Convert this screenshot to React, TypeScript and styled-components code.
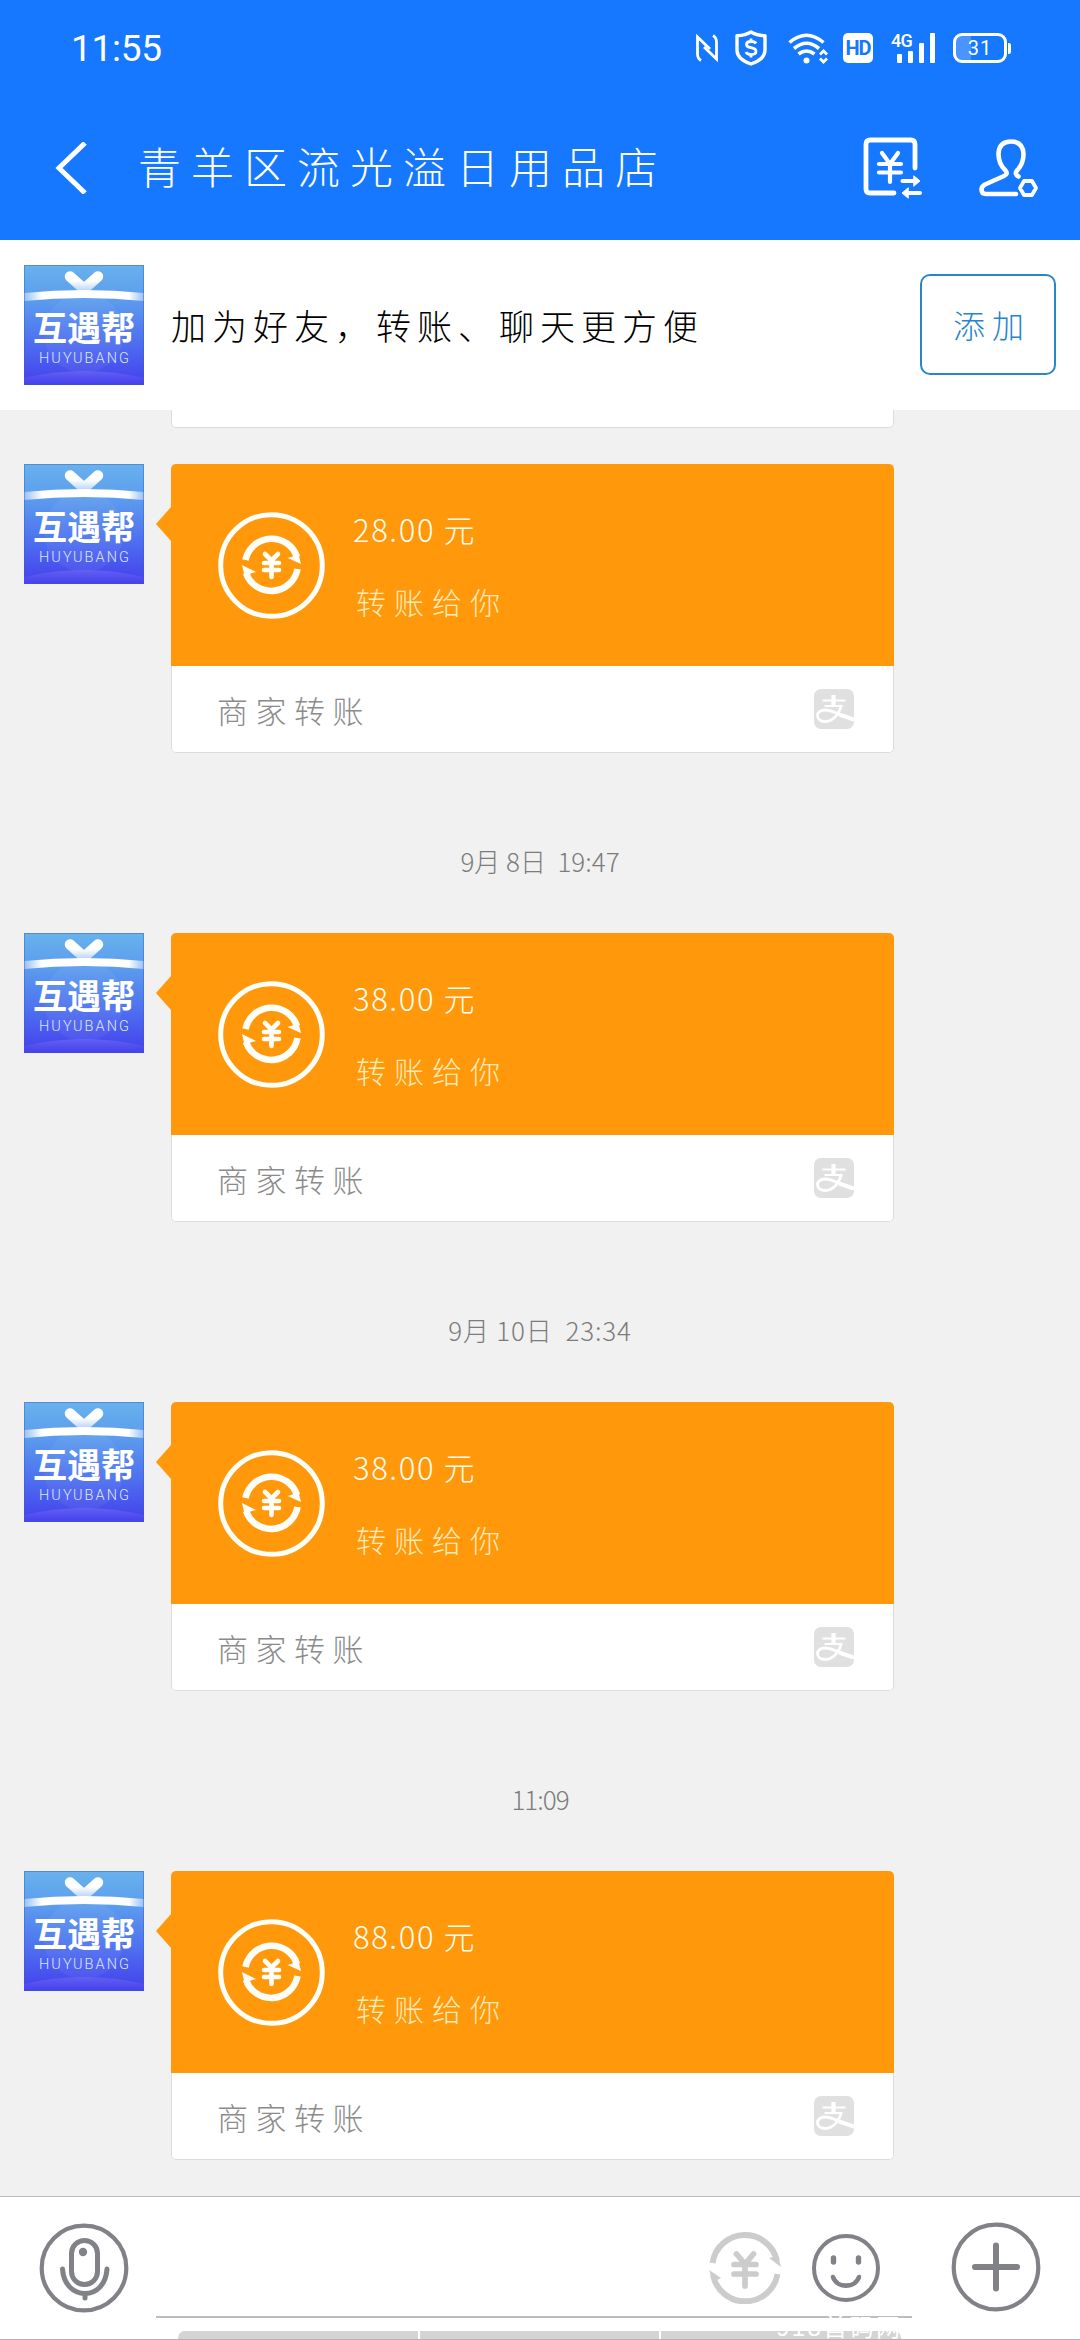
import React from 'react';
import styled, { createGlobalStyle } from 'styled-components';

const GlobalStyle = createGlobalStyle`
  *, *::before, *::after { box-sizing: border-box; }
  body {
    margin: 0;
    background: #f1f1f1;
    font-family: "Noto Sans CJK SC", "Noto Sans", sans-serif;
    font-weight: 300;
  }
  svg { display: block; flex: none; }
`;

const Screen = styled.div`
  width: 1080px;
  height: 2340px;
  display: flex;
  flex-direction: column;
  overflow: hidden;
  background: #f1f1f1;
`;

/* ---------- Header ---------- */

const Header = styled.header`
  flex: none;
  height: 240px;
  background: #1677ff;
  color: #fff;
  display: flex;
  flex-direction: column;
`;

const StatusBar = styled.div`
  height: 96px;
  padding: 0 69px 0 71px;
  display: flex;
  align-items: center;
  justify-content: space-between;
`;

const Clock = styled.span`
  font: 400 37px/1 Roboto, sans-serif;
  letter-spacing: -0.3px;
`;

const StatusIcons = styled.div`
  display: flex;
  align-items: center;
`;

const Slot = styled.div<{ $gap: number }>`
  margin-left: ${(p) => p.$gap}px;
  display: flex;
`;

const HdBadge = styled.span`
  width: 30px;
  height: 30px;
  border-radius: 5px;
  background: #fff;
  color: #1677ff;
  display: flex;
  align-items: center;
  justify-content: center;
  font: 700 20px/1 Roboto, sans-serif;
  letter-spacing: -1px;
`;

const Signal = styled.div`
  position: relative;
  width: 45px;
  height: 30px;
`;

const SignalLabel = styled.span`
  position: absolute;
  left: 0;
  top: -1px;
  font: 500 18px/18px Roboto, sans-serif;
  letter-spacing: -0.8px;
`;

const Battery = styled.div`
  width: 54px;
  height: 30px;
  border: 3px solid #fff;
  border-radius: 9px;
  background: linear-gradient(90deg, #4a94ff 31%, #1677ff 31%);
  display: flex;
  align-items: center;
  justify-content: center;
  font: 400 20px/1 Roboto, sans-serif;
  letter-spacing: 1px;
`;

const BatteryCap = styled.div`
  width: 3px;
  height: 11px;
  margin: 10px 0 0 1px;
  border-radius: 0 2px 2px 0;
  background: #fff;
`;

const TitleBar = styled.div`
  flex: 1;
  display: flex;
  align-items: center;
  padding: 0 40px 0 55px;
`;

const Title = styled.h1`
  flex: 1;
  margin: 0 0 6px 51px;
  font-size: 43px;
  line-height: 60px;
  font-weight: 300;
  letter-spacing: 10px;
  white-space: nowrap;
`;

const TitleActions = styled.div`
  display: flex;
  align-items: center;
  gap: 56px;
`;

/* ---------- Add-friend strip ---------- */

const FriendBar = styled.section`
  flex: none;
  height: 170px;
  padding: 0 24px;
  display: flex;
  align-items: center;
  background: #fff;
`;

const FriendText = styled.p`
  flex: 1;
  margin: 0 0 0 27px;
  color: #000;
  font-size: 35px;
  line-height: 50px;
  letter-spacing: 6px;
  white-space: nowrap;
`;

const AddButton = styled.button`
  width: 136px;
  height: 101px;
  margin-bottom: 1px;
  padding: 0 0 2px 8px;
  border: 2px solid #2a86c8;
  border-radius: 10px;
  background: #fff;
  color: #1f86d0;
  font: 300 32px/1 "Noto Sans CJK SC", sans-serif;
  letter-spacing: 7px;
`;

/* ---------- Conversation ---------- */

const Conversation = styled.main`
  flex: 1;
  min-height: 0;
  display: flex;
  flex-direction: column;
  overflow: hidden;
`;

const PreviousCard = styled.div`
  flex: none;
  width: 723px;
  height: 18px;
  margin: 0 0 36px 171px;
  background: #fff;
  border: 1px solid #dcdcdc;
  border-top: 0;
  border-radius: 0 0 5px 5px;
`;

const Timestamp = styled.time<{ $tracking: number }>`
  flex: none;
  height: 180px;
  padding-top: 88px;
  text-align: center;
  color: #7c7c7c;
  font-size: 26px;
  line-height: 40px;
  letter-spacing: ${(p) => p.$tracking}px;
  white-space: pre;
`;

const Message = styled.article`
  flex: none;
  height: 289px;
  padding-left: 24px;
  display: flex;
  align-items: flex-start;
`;

const BubbleTail = styled.div`
  width: 15px;
  height: 34px;
  margin: 43px 0 0 12px;
  background: #ff980a;
  clip-path: polygon(100% 0, 100% 100%, 0 50%);
`;

const Card = styled.div`
  width: 723px;
  height: 289px;
  border-radius: 5px;
  overflow: hidden;
  display: flex;
  flex-direction: column;
`;

const CardTop = styled.div`
  height: 202px;
  padding-left: 47px;
  display: flex;
  align-items: center;
  background: #ff980a;
`;

const CardLines = styled.div`
  margin: 0 0 0 28px;
  display: flex;
  flex-direction: column;
  gap: 24px;
  white-space: nowrap;
`;

const Amount = styled.span`
  color: #fffdf2;
  font-size: 31px;
  line-height: 48px;
  letter-spacing: 1.6px;
`;

const Note = styled.span`
  padding-left: 3px;
  color: #ffebb8;
  font-size: 30px;
  line-height: 48px;
  letter-spacing: 8px;
`;

const CardFooter = styled.div`
  flex: 1;
  padding: 0 39px 0 45px;
  display: flex;
  align-items: center;
  justify-content: space-between;
  background: #fff;
  border: 1px solid #dcdcdc;
  border-top: 0;
  border-radius: 0 0 5px 5px;
  color: #8b8b8b;
  font-size: 31px;
  letter-spacing: 7.5px;
`;

/* ---------- Composer ---------- */

const Composer = styled.footer`
  position: relative;
  flex: none;
  height: 144px;
  padding: 0 39px;
  display: flex;
  align-items: flex-start;
  background: #fff;
  border-top: 1px solid #bcbcbc;
  border-bottom: 1px solid #b4b4b4;
`;

const RoundButton = styled.div<{ $top: number }>`
  margin-top: ${(p) => p.$top}px;
`;

const InputField = styled.div`
  width: 756px;
  height: 121px;
  margin: 0 39px 0 27px;
  padding: 35px 32px 0 0;
  display: flex;
  align-items: flex-start;
  justify-content: flex-end;
  gap: 31px;
  border-bottom: 2px solid #bdbdbd;
`;

const EmojiButton = styled.div`
  margin-top: 2px;
`;

const SuggestionStrip = styled.div`
  position: absolute;
  left: 178px;
  bottom: 0;
  width: 723px;
  height: 8px;
  display: flex;
  gap: 2px;
`;

const SuggestionTab = styled.div`
  flex: 1;
  background: #d4d4d4;
  &:first-child { border-top-left-radius: 7px; }
  &:last-child { border-top-right-radius: 7px; }
`;

const Watermark = styled.span`
  position: absolute;
  left: 776px;
  bottom: -5px;
  color: #fff;
  font: 400 24px/32px "Liberation Sans", "Noto Sans CJK SC", sans-serif;
  letter-spacing: 2.4px;
  white-space: nowrap;
`;

/* ---------- Drawings ---------- */

const Avatar = () => (
  <svg width="120" height="120" viewBox="0 0 120 120">
    <defs>
      <linearGradient id="sky" x1="0" y1="0" x2="0" y2="1">
        <stop offset="0" stopColor="#68b2ec" />
        <stop offset="0.3" stopColor="#5b9bee" />
        <stop offset="0.65" stopColor="#4d6ff0" />
        <stop offset="1" stopColor="#443fec" />
      </linearGradient>
      <linearGradient id="ribbon" x1="0" y1="0" x2="1" y2="0">
        <stop offset="0" stopColor="#fff" stopOpacity="0.35" />
        <stop offset="0.15" stopColor="#fff" />
        <stop offset="0.87" stopColor="#fff" />
        <stop offset="1" stopColor="#fff" stopOpacity="0.35" />
      </linearGradient>
      <linearGradient id="bow" x1="0" y1="6" x2="0" y2="26" gradientUnits="userSpaceOnUse">
        <stop offset="0.5" stopColor="#fff" />
        <stop offset="1" stopColor="#b9d2f8" />
      </linearGradient>
      <linearGradient id="hill" x1="0" y1="0" x2="0" y2="1">
        <stop offset="0" stopColor="#6d68f6" />
        <stop offset="1" stopColor="#443fec" />
      </linearGradient>
    </defs>
    <rect width="120" height="120" fill="url(#sky)" />
    <circle cx="60" cy="68" r="40" fill="#fff" opacity="0.05" />
    <path d="M46 11.500L60 24L74 11.500" fill="none" stroke="url(#bow)" strokeWidth="10.5" strokeLinecap="round" strokeLinejoin="round" />
    <path d="M0 28Q60 22 120 28V36Q60 30 0 36Z" fill="url(#ribbon)" />
    <path d="M0 113Q60 99 120 113V120H0Z" fill="url(#hill)" opacity="0.7" />
    <text x="9" y="75.500" textLength="102" lengthAdjust="spacingAndGlyphs" fill="#fff"
      fontFamily="'Noto Sans CJK SC', sans-serif" fontWeight="700" fontSize="34">互遇帮</text>
    <text x="15" y="98" textLength="90" fill="#dfe6ff" fontFamily="Roboto, sans-serif" fontWeight="300" fontSize="14.5">HUYUBANG</text>
    <rect x="0.5" y="0.5" width="119" height="119" fill="none" stroke="#3b5bc4" strokeOpacity="0.45" />
  </svg>
);

const YenCycle = ({ size, stroke, color }: { size: number; stroke: number; color: string }) => (
  <svg width={size} height={size} viewBox="0 0 72 72" fill="none" stroke={color} strokeWidth={stroke}>
    <path d="M3.500 31A32.800 32.800 0 0 1 68 29" />
    <path d="M68.500 42A32.800 32.800 0 0 1 4 43" />
    <path d="M72 35L60 26L69 24Z" fill={color} stroke="none" />
    <path d="M0 38L12 46L4 50Z" fill={color} stroke="none" />
    <path d="M27.500 22L36 32L44.500 22M25 32.500H47M25 42H47M36 32V54" strokeWidth={stroke * 0.95} strokeLinecap="round" strokeLinejoin="round" />
  </svg>
);

const TransferIcon = () => (
  <svg width="107" height="107" viewBox="0 0 107 107" fill="none" stroke="#fffef8">
    <circle cx="53.500" cy="53.500" r="50.800" strokeWidth="5" />
    <path d="M27.500 48A26.700 26.700 0 0 1 79 45" strokeWidth="6.600" />
    <path d="M79.500 57A26.700 26.700 0 0 1 28 61" strokeWidth="6.600" />
    <path d="M83 52L69.500 46L76 44L80 40Z" fill="#fffef8" stroke="none" />
    <path d="M24 53L38 60L31 62L27 66Z" fill="#fffef8" stroke="none" />
    <path d="M47 42L53.500 48.500L60 42M46 51H61M46 58H61M53.500 49V65" strokeWidth="4.600" strokeLinecap="round" />
  </svg>
);

const PayBadge = () => (
  <svg width="40" height="40" viewBox="0 0 40 40" fill="none">
    <rect width="40" height="40" rx="7" fill="#e0e0e0" />
    <g stroke="#fff">
      <path d="M8.500 11.500H31.500M10.500 17H28" strokeWidth="2" />
      <path d="M19.500 6V17" strokeWidth="4.200" />
      <path d="M27.500 16C26 23 20 32.500 11.500 32.500C6 32.500 3.500 29.500 3.500 26.500C3.500 23.500 6.500 21 11 21C19 21 27 27 40 30.500" strokeWidth="2.800" />
      <path d="M25 25.500L40 30.500" strokeWidth="4" />
    </g>
  </svg>
);

const NfcIcon = () => (
  <svg width="22" height="28" viewBox="0 0 22 28" fill="none" stroke="#fff" strokeWidth="2.800">
    <path d="M5 26.500Q1.500 24.500 1.500 20V3L14 15" />
    <path d="M17 1.500Q20.500 3.500 20.500 8V25L8 13" />
  </svg>
);

const ShieldIcon = () => (
  <svg width="32" height="36" viewBox="0 0 32 36" fill="none" stroke="#fff" strokeWidth="3.400" strokeLinejoin="round">
    <path d="M16 2C12 4.500 7 5.500 2 5.800V20C2 28 10 32 16 34C22 32 30 28 30 20V5.800C25 5.500 20 4.500 16 2Z" />
    <path d="M21 13.500Q20 11.500 16 11.500Q11.500 11.500 11.500 14.500Q11.500 17 16 17.700Q21 18.500 21 21.500Q21 24.500 16 24.500Q12 24.500 11 22M16 8.500V12M16 24V27.500" strokeWidth="2.800" />
  </svg>
);

const WifiIcon = () => (
  <svg width="40" height="31" viewBox="0 0 40 31" fill="none" stroke="#fff" strokeWidth="3.600">
    <path d="M1.500 9.500Q18.500 -5 35.500 9.500" />
    <path d="M6 15.500Q18.500 5 31 15.500" />
    <path d="M10.500 21Q18.500 15 26.500 21" />
    <circle cx="18.500" cy="27.500" r="3" fill="#fff" stroke="none" />
    <path d="M32 21.500L35.500 18L39 21.500M32 25.500L35.500 29L39 25.500" strokeWidth="2.800" />
  </svg>
);

const SignalBars = () => (
  <svg width="45" height="30" viewBox="0 0 45 30" fill="#fff">
    <rect x="6" y="21" width="5" height="9" rx="1" />
    <rect x="17" y="18" width="5" height="12" rx="1" />
    <rect x="28" y="10" width="5" height="20" rx="1" />
    <rect x="39" y="0" width="5" height="30" rx="1" />
  </svg>
);

const BackIcon = () => (
  <svg width="32" height="52" viewBox="0 0 32 52" fill="none" stroke="#fff" strokeWidth="5">
    <path d="M30 1L4 26L30 51" />
  </svg>
);

const BillIcon = () => (
  <svg width="60" height="62" viewBox="0 0 60 62" fill="none" stroke="#fff" strokeWidth="4.800" strokeLinecap="round" strokeLinejoin="round">
    <path d="M52 31V7Q52 3 48 3H7Q3 3 3 7V52Q3 56 7 56H31" />
    <path d="M19 16L27 27L35 16M16 27H38M16 35.500H38M27 27V45" strokeWidth="4.200" />
    <path d="M39.500 44H50M57 56H46" strokeWidth="4" />
    <path d="M51 39L57 44L51 49ZM45 51L39 56L45 61Z" fill="#fff" strokeWidth="1" />
  </svg>
);

const ContactIcon = () => (
  <svg width="61" height="60" viewBox="0 0 61 60" fill="none" stroke="#fff" strokeWidth="4.600" strokeLinecap="round" strokeLinejoin="round">
    <path d="M37 56H7Q2.500 56 2.500 51.500Q2.500 48.500 6 46.500L25 38Q29.500 36 26.500 32.500Q19.500 26 19.500 16Q20 3.500 32 3.500Q44 3.500 44.500 16Q44.500 26 38 32.500Q35 36 39.500 38.500" />
    <path d="M45 43H53L57 50L53 57H45L41 50Z" strokeWidth="3.800" />
  </svg>
);

const MicIcon = () => (
  <svg width="90" height="90" viewBox="0 0 90 90" fill="none" stroke="#808287">
    <circle cx="45" cy="45" r="42.300" strokeWidth="4.200" />
    <rect x="32.500" y="17.500" width="26" height="44" rx="13" strokeWidth="5" />
    <path d="M23.500 46C24.500 61 34 70.500 46 70.500C58 70.500 67 61 68 46" strokeWidth="5" strokeLinecap="round" />
    <path d="M46 71V75" strokeWidth="5" strokeLinecap="round" />
    <circle cx="44" cy="29" r="4.200" fill="#808287" stroke="none" />
  </svg>
);

const SmileIcon = () => (
  <svg width="68" height="68" viewBox="0 0 68 68" fill="none" stroke="#808287">
    <circle cx="34" cy="34" r="32" strokeWidth="4" />
    <path d="M21.500 24V28M46.500 24V28" strokeWidth="5.400" strokeLinecap="round" />
    <path d="M21 43C25 54.500 43 54.500 47 43" strokeWidth="4.600" strokeLinecap="round" />
  </svg>
);

const PlusIcon = () => (
  <svg width="90" height="90" viewBox="0 0 90 90" fill="none" stroke="#808287">
    <circle cx="45" cy="45" r="42.300" strokeWidth="4.200" />
    <path d="M45 23.500V66.500M24 45H66" strokeWidth="6" strokeLinecap="round" />
  </svg>
);

/* ---------- Screen ---------- */

const transfers = [
  { amount: '28.00', nextTime: '9月 8日  19:47', tracking: 0 },
  { amount: '38.00', nextTime: '9月 10日  23:34', tracking: 0.8 },
  { amount: '38.00', nextTime: '11:09', tracking: -1 },
  { amount: '88.00', nextTime: null, tracking: 0 },
];

const TransferMessage = ({ amount }: { amount: string }) => (
  <Message>
    <Avatar />
    <BubbleTail />
    <Card>
      <CardTop>
        <TransferIcon />
        <CardLines>
          <Amount>{amount} 元</Amount>
          <Note>转账给你</Note>
        </CardLines>
      </CardTop>
      <CardFooter>
        <span>商家转账</span>
        <PayBadge />
      </CardFooter>
    </Card>
  </Message>
);

export default function App() {
  return (
    <>
      <GlobalStyle />
      <Screen>
        <Header>
          <StatusBar>
            <Clock>11:55</Clock>
            <StatusIcons>
              <Slot $gap={0}><NfcIcon /></Slot>
              <Slot $gap={17}><ShieldIcon /></Slot>
              <Slot $gap={21}><WifiIcon /></Slot>
              <Slot $gap={15}><HdBadge>HD</HdBadge></Slot>
              <Slot $gap={18}>
                <Signal>
                  <SignalLabel>4G</SignalLabel>
                  <SignalBars />
                </Signal>
              </Slot>
              <Slot $gap={17}>
                <Battery>31</Battery>
                <BatteryCap />
              </Slot>
            </StatusIcons>
          </StatusBar>
          <TitleBar>
            <BackIcon />
            <Title>青羊区流光溢日用品店</Title>
            <TitleActions>
              <BillIcon />
              <ContactIcon />
            </TitleActions>
          </TitleBar>
        </Header>
        <FriendBar>
          <Avatar />
          <FriendText>加为好友，转账、聊天更方便</FriendText>
          <AddButton>添加</AddButton>
        </FriendBar>
        <Conversation>
          <PreviousCard />
          {transfers.map((t, i) => (
            <React.Fragment key={i}>
              <TransferMessage amount={t.amount} />
              {t.nextTime && <Timestamp $tracking={t.tracking}>{t.nextTime}</Timestamp>}
            </React.Fragment>
          ))}
        </Conversation>
        <Composer>
          <RoundButton $top={26}><MicIcon /></RoundButton>
          <InputField>
            <YenCycle size={72} stroke={6} color="#cccccc" />
            <EmojiButton><SmileIcon /></EmojiButton>
          </InputField>
          <RoundButton $top={25}><PlusIcon /></RoundButton>
          <SuggestionStrip>
            <SuggestionTab />
            <SuggestionTab />
            <SuggestionTab />
          </SuggestionStrip>
          <Watermark>918首码网</Watermark>
        </Composer>
      </Screen>
    </>
  );
}
